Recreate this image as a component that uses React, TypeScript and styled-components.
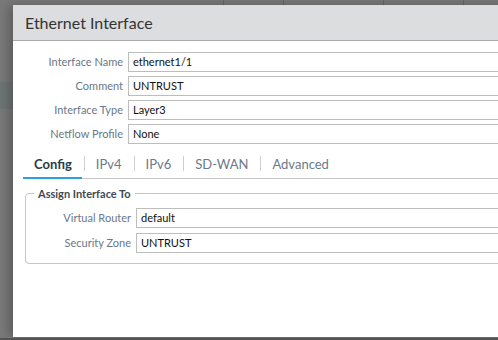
import { FC, Fragment } from 'react';
import styled, { createGlobalStyle } from 'styled-components';

const GlobalStyle = createGlobalStyle`
  html, body {
    margin: 0;
    padding: 0;
    width: 498px;
    height: 340px;
    overflow: hidden;
    background: #535353;
    font-family: Lato, "Open Sans", sans-serif;
  }
`;

const Backdrop = styled.div`
  position: relative;
  width: 498px;
  height: 338px;
  background: #797979;
  overflow: hidden;
`;

const UnderRow = styled.div`
  display: flex;
  height: 5px;
  div {
    border-right: 1px solid #666;
  }
`;

const UnderBand = styled.div`
  position: absolute;
  left: 0;
  top: 82px;
  width: 13px;
  height: 27px;
  background: #6e7474;
`;

const Dialog = styled.div`
  position: absolute;
  left: 13px;
  top: 5px;
  width: 600px;
  height: 332px;
  background: #fff;
  box-shadow: -4px 0 10px rgba(0, 0, 0, 0.25);
  display: flex;
  flex-direction: column;
`;

const Header = styled.div`
  height: 35px;
  background: #dcdddf;
  border-bottom: 1px solid #a9a9a9;
  display: flex;
  align-items: center;
  padding-left: 12px;
  font-size: 16px;
  color: #333;
`;

const Form = styled.div`
  display: grid;
  grid-template-columns: 110px 1fr;
  column-gap: 5px;
  row-gap: 4px;
  padding: 11px 0 0 0;
`;

const Label = styled.label`
  text-align: right;
  font-size: 11px;
  color: #6a7786;
  line-height: 20px;
  white-space: nowrap;
`;

const Input = styled.div`
  box-sizing: border-box;
  height: 20px;
  border: 1px solid #bdbdbd;
  padding-left: 4px;
  font-size: 11px;
  line-height: 18px;
  color: #111;
`;

const Tabs = styled.div`
  display: flex;
  align-items: center;
  margin: 4px 0 0 10px;
  height: 30px;
  border-bottom: 1px solid #c6c6c6;
`;

const Tab = styled.div<{ active?: boolean }>`
  height: 100%;
  box-sizing: border-box;
  display: flex;
  align-items: center;
  padding: 2px 10px 0 11px;
  font-size: 13px;
  font-weight: ${({ active }) => (active ? 700 : 400)};
  color: ${({ active }) => (active ? '#2c3a47' : '#6b7a8c')};
  border-bottom: 2px solid ${({ active }) => (active ? '#2aa1dc' : 'transparent')};
  margin-bottom: -1px;
`;

const Sep = styled.span`
  width: 1px;
  height: 15px;
  background: #cfcfcf;
  margin: 0 0 0 2px;
`;

const Group = styled.fieldset`
  margin: 8px 12px 0 12px;
  padding: 8px 0 10px 0;
  border: 1px solid #c6c6c6;
  border-radius: 4px;
  display: grid;
  grid-template-columns: 105px 1fr;
  column-gap: 5px;
  row-gap: 5px;
`;

const Legend = styled.legend`
  margin-left: 8px;
  padding: 0 4px;
  font-size: 11px;
  font-weight: 700;
  color: #3d4a57;
`;

const tabs = ['IPv4', 'IPv6', 'SD-WAN', 'Advanced'];

const App: FC = () => (
  <>
    <GlobalStyle />
    <Backdrop>
      <UnderRow>
        <div style={{ width: 223 }} />
        <div style={{ width: 59 }} />
        <div style={{ width: 99 }} />
        <div style={{ width: 79 }} />
      </UnderRow>
      <UnderBand />
      <Dialog>
        <Header>Ethernet Interface</Header>
        <Form>
          <Label>Interface Name</Label>
          <Input>ethernet1/1</Input>
          <Label>Comment</Label>
          <Input>UNTRUST</Input>
          <Label>Interface Type</Label>
          <Input>Layer3</Input>
          <Label>Netflow Profile</Label>
          <Input>None</Input>
        </Form>
        <Tabs>
          <Tab active>Config</Tab>
          {tabs.map((t) => (
            <Fragment key={t}>
              <Sep />
              <Tab>{t}</Tab>
            </Fragment>
          ))}
        </Tabs>
        <Group>
          <Legend>Assign Interface To</Legend>
          <Label>Virtual Router</Label>
          <Input>default</Input>
          <Label>Security Zone</Label>
          <Input>UNTRUST</Input>
        </Group>
      </Dialog>
    </Backdrop>
  </>
);

export default App;
